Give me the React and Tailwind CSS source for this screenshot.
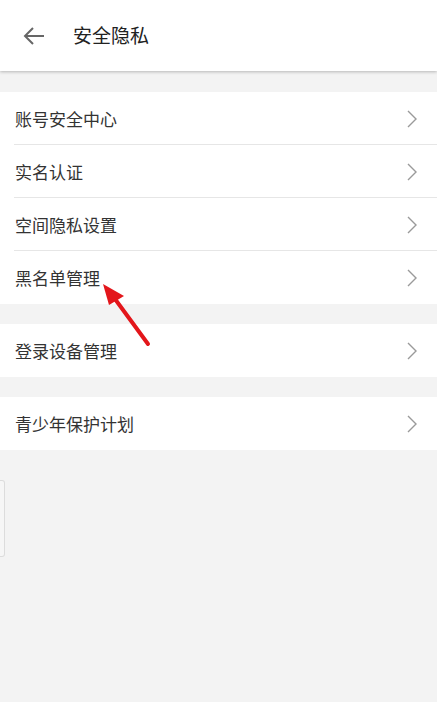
import React from 'react';

const font = { fontFamily: '"Noto Sans CJK SC", "Noto Sans", sans-serif' };

const Chevron = () => (
  <svg width="12" height="20" viewBox="0 0 12 20" fill="none" stroke="#9a9a9a" strokeWidth="1.4">
    <path d="M2 2 L10 10 L2 18" />
  </svg>
);

const Row = ({ label, last }) => (
  <div className="flex items-center h-[53px] pl-[15px] pr-[19px] relative">
    <span className="flex-1 text-[17px] text-[#333]">{label}</span>
    <Chevron />
    {!last && <div className="absolute left-[14px] right-0 bottom-0 h-px bg-[#e6e6e6]" />}
  </div>
);

const Group = ({ items }) => (
  <div className="bg-white">
    {items.map((t, i) => (
      <Row key={t} label={t} last={i === items.length - 1} />
    ))}
  </div>
);

export default function App() {
  return (
    <div className="w-[437px] h-[702px] bg-[#f3f3f3] relative overflow-hidden" style={font}>
      <header className="h-[71px] bg-white flex items-center shadow-[0_1px_3px_rgba(0,0,0,0.25)] relative z-10">
        <svg className="ml-[23px]" width="22" height="20" viewBox="0 0 22 20" fill="none" stroke="#666" strokeWidth="2">
          <path d="M21 10 H2 M10 2 L2 10 L10 18" />
        </svg>
        <span className="ml-[28px] text-[19px] text-[#222]">安全隐私</span>
      </header>
      <div className="flex flex-col gap-5 pt-[21px]">
        <Group items={['账号安全中心', '实名认证', '空间隐私设置', '黑名单管理']} />
        <Group items={['登录设备管理']} />
        <Group items={['青少年保护计划']} />
      </div>
      <div className="absolute left-0 top-[480px] w-[5px] h-[77px] border border-l-0 border-[#dcdcdc] rounded-r-[3px] bg-[#f6f6f6]" />
      <svg className="absolute left-0 top-0 pointer-events-none" width="437" height="702">
        <line x1="148" y1="344" x2="115" y2="299" stroke="#e3161b" strokeWidth="4" strokeLinecap="round" />
        <polygon points="103,284 124,296 109,305" fill="#e3161b" />
      </svg>
    </div>
  );
}
